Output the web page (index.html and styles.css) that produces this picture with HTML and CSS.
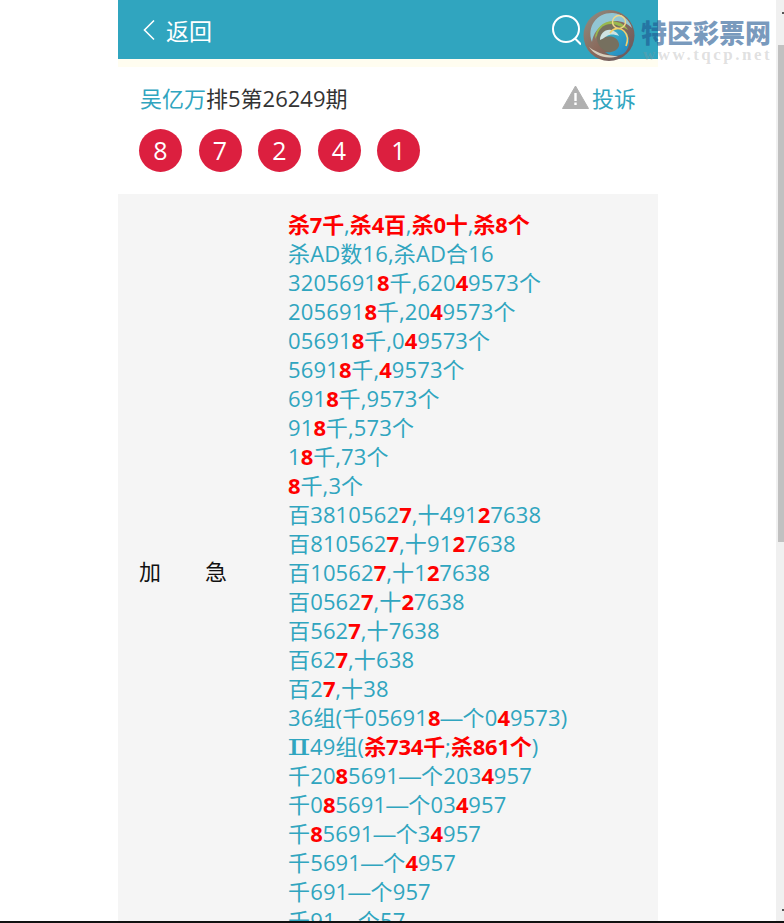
FILE: index.html
```html
<!DOCTYPE html>
<html lang="zh-CN">
<head>
  <meta charset="UTF-8">
  <meta name="viewport" content="width=device-width, initial-scale=1.0">
  <title>吴亿万排5第26249期</title>
  <link rel="stylesheet" href="styles.css">
</head>
<body>
  <div class="page">
    <div class="header">
      <div class="back">
        <svg class="back-icon" width="14" height="22" viewBox="0 0 14 22"><path d="M12 1.500 2.500 11 12 20.500" fill="none" stroke="#fff" stroke-width="1.600"/></svg>
        <span>返回</span>
      </div>
      <svg class="search-icon" width="30" height="32" viewBox="0 0 30 32"><circle cx="15" cy="15" r="13" fill="none" stroke="#fff" stroke-width="2"/><path d="M24 24.500l6 6" fill="none" stroke="#fff" stroke-width="2"/></svg>
    </div>
    <div class="strip"></div>
    <div class="info">
      <div class="title-row">
        <div class="title"><span class="author">吴亿万</span>排5第26249期</div>
        <div class="report">
          <svg width="27" height="24" viewBox="0 0 27 24"><path d="M13.500 1 26.500 23.500H.5z" fill="#b0b0b0" stroke="#b0b0b0" stroke-linejoin="round"/><rect x="12.300" y="8" width="2.400" height="8" fill="#fff"/><rect x="12.300" y="17.500" width="2.400" height="2.500" fill="#fff"/></svg>
          <span>投诉</span>
        </div>
      </div>
      <div class="balls">
        <div class="ball">8</div>
        <div class="ball">7</div>
        <div class="ball">2</div>
        <div class="ball">4</div>
        <div class="ball">1</div>
      </div>
    </div>
    <div class="detail">
      <div class="label">加　　急</div>
      <div class="lines">
        <div><b>杀7千</b>,<b>杀4百</b>,<b>杀0十</b>,<b>杀8个</b></div>
        <div>杀AD数16,杀AD合16</div>
        <div>3205691<b>8</b>千,620<b>4</b>9573个</div>
        <div>205691<b>8</b>千,20<b>4</b>9573个</div>
        <div>05691<b>8</b>千,0<b>4</b>9573个</div>
        <div>5691<b>8</b>千,<b>4</b>9573个</div>
        <div>691<b>8</b>千,9573个</div>
        <div>91<b>8</b>千,573个</div>
        <div>1<b>8</b>千,73个</div>
        <div><b>8</b>千,3个</div>
        <div>百3810562<b>7</b>,十491<b>2</b>7638</div>
        <div>百810562<b>7</b>,十91<b>2</b>7638</div>
        <div>百10562<b>7</b>,十1<b>2</b>7638</div>
        <div>百0562<b>7</b>,十<b>2</b>7638</div>
        <div>百562<b>7</b>,十7638</div>
        <div>百62<b>7</b>,十638</div>
        <div>百2<b>7</b>,十38</div>
        <div>36组(千05691<b>8</b><span class="dash">—</span>个0<b>4</b>9573)</div>
        <div><span class="roman">Ⅱ</span>49组(<b>杀734千</b>;<b>杀861个</b>)</div>
        <div>千20<b>8</b>5691<span class="dash">—</span>个203<b>4</b>957</div>
        <div>千0<b>8</b>5691<span class="dash">—</span>个03<b>4</b>957</div>
        <div>千<b>8</b>5691<span class="dash">—</span>个3<b>4</b>957</div>
        <div>千5691<span class="dash">—</span>个<b>4</b>957</div>
        <div>千691<span class="dash">—</span>个957</div>
        <div>千91<span class="dash">—</span>个57</div>
      </div>
    </div>
  </div>

  <!-- watermark from the capture -->
  <div class="watermark">
    <svg class="wm-logo" width="52" height="53" viewBox="0 0 52 53">
      <defs>
        <linearGradient id="rim" x1="0" y1="0" x2="1" y2="1">
          <stop offset="0" stop-color="#8d8f86"/>
          <stop offset="0.5" stop-color="#8b6a5c"/>
          <stop offset="1" stop-color="#5f5660"/>
        </linearGradient>
        <linearGradient id="core" x1="0" y1="0" x2="1" y2="1">
          <stop offset="0" stop-color="#3fb4c4"/>
          <stop offset="1" stop-color="#1f86c4"/>
        </linearGradient>
      </defs>
      <circle cx="26" cy="26.500" r="25.500" fill="url(#rim)"/>
      <path d="M9 33C3 17 15 3 30 4c9 1 16 6 19 15-7-7-17-9-26-5C15 18 10 25 9 33z" fill="#92c6d4"/>
      <path d="M12 30c0-12 11-20 22-17 5 1 9 4 11 8-8-5-16-6-22-2-6 3-9 7-11 11z" fill="#98b94f"/>
      <circle cx="28" cy="29" r="14" fill="#76705f"/>
      <path d="M23 28c3-8 13-10 20-5 5 7 4 17-3 22-7 3-13 2-18-2 7 1 12-1 14-6 1-5-5-12-13-9z" fill="url(#core)"/>
      <path d="M17 31c0-6 5-11 11-10 4 1 7 3 8 6-5-2-9-2-12 0-3 2-5 3-7 4z" fill="#cfe3e2"/>
      <path d="M6 38c6 9 18 13 29 9-9 0-20-2-29-9z" fill="#d8d0c0"/>
      <circle cx="36" cy="13" r="6.500" fill="none" stroke="#f2d98a" stroke-width="1.400"/>
      <path d="M27 24c3-5 10-6 14-2 4 4 4 10 2 15" fill="none" stroke="#f4cf6a" stroke-width="1.600"/>
    </svg>
    <div class="wm-text">
      <div class="wm-name">特区彩票网</div>
      <div class="wm-url">www.tqcp.net</div>
    </div>
  </div>

  <div class="scrollbar">
    <div class="thumb"></div>
  </div>
  <div class="scroll-mark mark-up"></div>
  <div class="scroll-mark mark-down"></div>
  <div class="bottom-line"></div>
</body>
</html>
```

FILE: styles.css
```css
html, body {
  margin: 0;
  height: 100%;
  overflow: hidden;
  background: #fff;
}
body {
  font-family: "Open Sans", "Noto Sans CJK SC", sans-serif;
  font-size: 22px;
  color: #333;
}
.page {
  width: 540px;
  height: 921px;
  margin-left: 118px;
  overflow: hidden;
  background: #fff;
}
.header {
  height: 59px;
  background: #30a5bf;
  color: #fff;
  display: flex;
  align-items: center;
  justify-content: space-between;
}
.back {
  display: flex;
  align-items: center;
  gap: 10px;
  margin-left: 24px;
  font-size: 23px;
}
.search-icon {
  margin-right: 77px;
}
.strip {
  height: 8px;
  background: #fffdf0;
}
.info {
  height: 127px;
  padding: 0 22px 0 21px;
}
.title-row {
  display: flex;
  justify-content: space-between;
  align-items: center;
  height: 52px;
  padding-top: 4px;
  padding-left: 1px;
}
.author, .report {
  color: #30a5bf;
}
.report {
  display: flex;
  align-items: center;
  gap: 3px;
}
.balls {
  display: flex;
  gap: 16.500px;
  margin-top: 6px;
}
.ball {
  width: 43px;
  height: 43px;
  border-radius: 50%;
  background: #dc1f3f;
  color: #fff;
  font-family: "Open Sans", sans-serif;
  font-size: 25px;
  line-height: 43px;
  text-align: center;
}
.detail {
  display: flex;
  background: #f5f5f5;
  color: #30a5bf;
}
.label {
  width: 171px;
  flex: none;
  box-sizing: border-box;
  padding: 10px 0 0 21px;
  font-family: "Noto Sans CJK SC", sans-serif;
  color: #111;
  display: flex;
  align-items: center;
}
.lines {
  margin-left: -1px;
  padding-top: 16px;
  letter-spacing: 0.150px;
}
.lines div {
  height: 29px;
  line-height: 29px;
  white-space: nowrap;
}
.lines b {
  color: #f00;
  letter-spacing: -0.200px;
}
.dash {
  font-family: "Liberation Sans", sans-serif;
  line-height: 1;
}
.roman {
  display: inline-block;
  width: 22px;
  font-family: "DejaVu Serif", serif;
  line-height: 1;
  text-align: center;
  transform: scaleX(1.600);
}
.watermark {
  position: absolute;
  top: 9px;
  left: 583px;
  display: flex;
  gap: 6px;
}
.wm-text {
  padding-top: 8px;
}
.wm-name {
  font-family: "Noto Sans CJK SC", sans-serif;
  font-weight: 900;
  font-size: 26px;
  line-height: 29px;
  color: rgba(30, 85, 145, 0.6);
  white-space: nowrap;
}
.wm-url {
  margin-left: 2px;
  font-family: "Liberation Serif", serif;
  font-weight: 700;
  font-size: 17px;
  letter-spacing: 2.500px;
  line-height: 18px;
  color: rgba(150, 150, 150, 0.3);
}
.scrollbar {
  position: absolute;
  top: 0;
  right: 0;
  bottom: 0;
  width: 8px;
  background: #f0f0f0;
}
.thumb {
  margin: 45px 0 0 2px;
  height: 497px;
  background: #c1c1c1;
}
.scroll-mark {
  position: absolute;
  right: 0;
  width: 2px;
  height: 2px;
  background: #555;
}
.mark-up {
  top: 12px;
}
.mark-down {
  bottom: 12px;
}
.bottom-line {
  position: absolute;
  left: 0;
  right: 0;
  bottom: 0;
  height: 2px;
  background: #111;
}
```
